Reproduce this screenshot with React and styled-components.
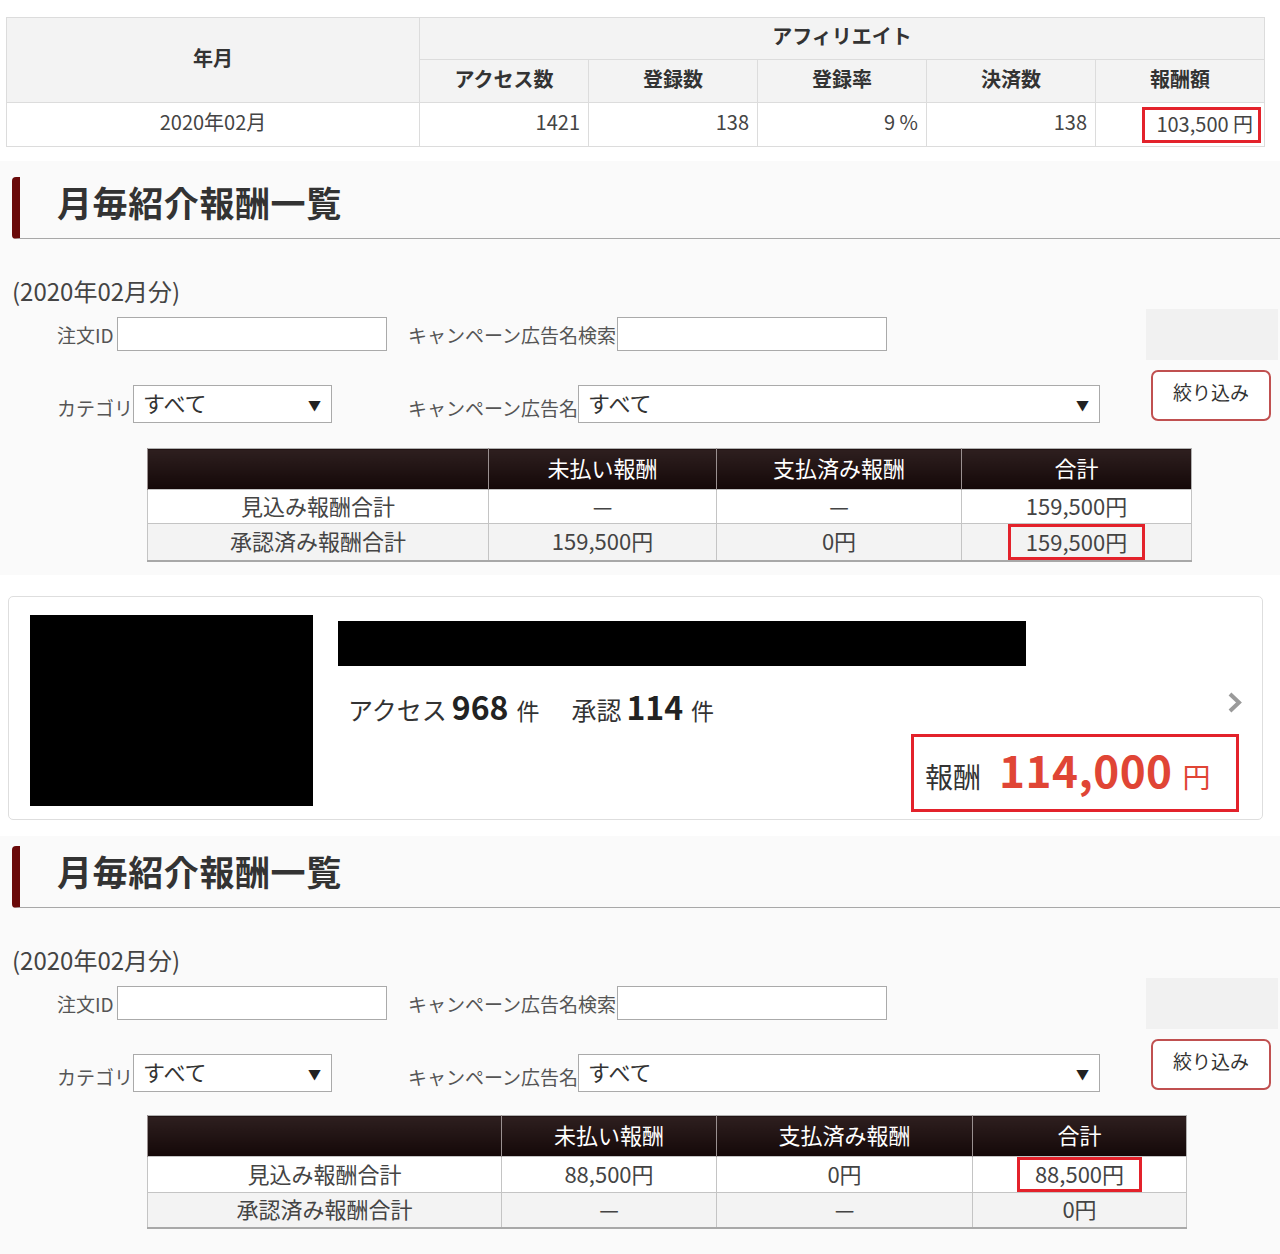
import React from 'react';
import styled, { createGlobalStyle } from 'styled-components';

const Global = createGlobalStyle`
  html, body { margin: 0; padding: 0; background: #fff; }
  body { font-family: "Noto Sans CJK JP", "Noto Sans", sans-serif; color: #333; }
  * { box-sizing: border-box; }
`;

const Page = styled.div`
  width: 1280px;
  background: #fff;
`;

/* ---------- top stats table ---------- */
const TopWrap = styled.div`
  padding: 17px 16px 14px 6px;
`;
const StatTable = styled.table`
  width: 1258px;
  border-collapse: collapse;
  table-layout: fixed;
  font-size: 20px;
  line-height: 1.2;
`;
const StatTh = styled.th`
  height: ${p => p.$h}px;
  background: #f3f3f3;
  border: 1px solid #dcdcdc;
  font-weight: 700;
  color: #333;
  text-align: center;
  padding: 0 0 5px;
`;
const StatTd = styled.td`
  height: 44px;
  border: 1px solid #dcdcdc;
  background: #fff;
  color: #444;
  text-align: ${p => p.$align || 'right'};
  padding: 0 ${p => p.$pr ?? 8}px ${p => p.$pb ?? 5}px 8px;
`;

/* ---------- highlight box ---------- */
const Highlight = styled.span`
  display: inline-block;
  vertical-align: middle;
  border: 3px solid #e3222b;
  height: ${p => p.$h}px;
  line-height: ${p => p.$h - 8}px;
  padding: 0 ${p => p.$px}px 0 ${p => p.$pl ?? p.$px}px;
`;

/* ---------- section ---------- */
const Section = styled.section`
  background: #fafafa;
  padding: ${p => p.$top}px 0 ${p => p.$bottom}px;
`;
const Title = styled.h2`
  margin: 0 0 0 12px;
  height: 62px;
  display: flex;
  align-items: center;
  padding: 0 0 12px 37px;
  border-left: 8px solid #6a0a0a;
  border-bottom: 1px solid #a8a8a8;
  border-radius: 4px 0 0 4px;
  font-size: 35px;
  font-weight: 700;
  color: #333;
  letter-spacing: 0.6px;
`;
const Period = styled.div`
  margin-top: 37px;
  padding-left: 12px;
  font-size: 24px;
  line-height: 30px;
  color: #444;
`;

const FilterArea = styled.div`
  display: flex;
  margin-top: 3px;
`;
const Fields = styled.div`
  flex: 1;
  padding: 8px 0 0 57px;
  display: flex;
  flex-direction: column;
  gap: 34px;
`;
const FieldRow = styled.div`
  display: flex;
  align-items: center;
  height: ${p => p.$h}px;
`;
const FieldGroup = styled.div`
  display: flex;
  align-items: center;
  width: ${p => (p.$w ? `${p.$w}px` : 'auto')};
  height: 100%;
`;
const Label = styled.span`
  width: ${p => p.$w}px;
  white-space: nowrap;
  font-size: 19px;
  color: #555;
  padding-top: ${p => p.$pt || 0}px;
`;
const TextInput = styled.input`
  width: ${p => p.$w}px;
  height: 100%;
  border: 1px solid #aaa;
  background: #fff;
  margin: 0;
  padding: 0 6px;
  font: inherit;
`;
const SelectBox = styled.div`
  width: ${p => p.$w}px;
  height: 100%;
  border: 1px solid #aaa;
  background: #fff;
  display: flex;
  align-items: center;
  justify-content: space-between;
  padding: 0 10px 4px 9px;
  font-size: 22px;
  color: #333;
`;
const Arrow = styled.span`
  font-size: 13px;
  color: #222;
  padding-top: 4px;
`;
const Side = styled.div`
  width: 132px;
  margin-right: 2px;
  display: flex;
  flex-direction: column;
`;
const GrayBox = styled.div`
  height: 51px;
  background: #f1f1f1;
`;
const FilterButton = styled.button`
  margin: 10px 0 0 5px;
  width: 120px;
  height: 51px;
  border: 2px solid #c05050;
  border-radius: 7px;
  background: #fff;
  font-family: inherit;
  font-size: 19px;
  color: #333;
  padding: 0 0 8px;
`;

const SumTable = styled.table`
  margin: ${p => p.$mt}px 0 0 147px;
  width: ${p => p.$w}px;
  border-collapse: collapse;
  table-layout: fixed;
  font-size: 22px;
  line-height: 1.1;
  border: 1px solid #b0b0b0;
  border-bottom: 2px solid #a8a8a8;
`;
const SumTh = styled.th`
  height: 41px;
  background: linear-gradient(#2e1f1f, #140808);
  color: #fff;
  font-weight: 400;
  border-left: 1px solid #9a9090;
  padding: 0 0 4px;
  text-align: center;
`;
const SumRow = styled.tr`
  background: ${p => (p.$alt ? '#f3f3f3' : '#fff')};
`;
const SumTd = styled.td`
  height: ${p => p.$h}px;
  border: 1px solid #c4c4c4;
  text-align: center;
  color: #444;
  padding: 0 0 3px;
`;
const SumTdHl = styled(SumTd)`
  padding: 0;
  line-height: 0;
`;

/* ---------- campaign card ---------- */
const Card = styled.div`
  margin: 21px 17px 16px 8px;
  border: 1px solid #dedede;
  border-radius: 5px;
  background: #fff;
  padding: 18px 19px 7px 21px;
  display: flex;
  align-items: flex-start;
`;
const Thumb = styled.div`
  width: 283px;
  height: 191px;
  background: #000;
  flex-shrink: 0;
`;
const CardBody = styled.div`
  flex: 1;
  margin-left: 25px;
  display: flex;
  flex-direction: column;
`;
const NameBar = styled.div`
  margin-top: 6px;
  width: 688px;
  height: 45px;
  background: #000;
`;
const StatsRow = styled.div`
  margin-top: 25px;
  height: 36px;
  display: flex;
  align-items: center;
  justify-content: space-between;
  padding-left: 10px;
`;
const Stats = styled.div`
  display: flex;
  align-items: baseline;
  gap: 32px;
  color: #333;
  padding-bottom: 6px;
`;
const Stat = styled.span`
  font-size: 25px;
  white-space: nowrap;
`;
const StatNum = styled.b`
  font-size: 32px;
  font-weight: 700;
  color: #222;
  margin: 0 8px 0 5px;
`;
const StatUnit = styled.span`
  font-size: 23px;
`;
const ChevronWrap = styled.span`
  align-self: flex-start;
  display: flex;
`;
const RewardBox = styled.div`
  align-self: flex-end;
  margin: 7px 4px 0 0;
  width: 328px;
  height: 78px;
  border: 3px solid #e3222b;
  display: flex;
  align-items: center;
  padding: 0 0 8px 11px;
`;
const RewardLine = styled.div`
  display: flex;
  align-items: baseline;
`;
const RewardLabel = styled.span`
  font-size: 28px;
  color: #333;
  margin-right: 18px;
`;
const RewardValue = styled.span`
  font-size: 44px;
  font-weight: 700;
  color: #e04535;
  letter-spacing: 0.5px;
`;
const RewardYen = styled.span`
  font-size: 28px;
  color: #e04535;
  margin-left: 10px;
`;

const Chevron = () => (
  <svg width="17" height="23" viewBox="0 0 17 23">
    <polyline points="4,3 13,11.5 4,20" fill="none" stroke="#9a9a9a" strokeWidth="4" />
  </svg>
);

const Summary = ({ cols, mt, rows }) => (
  <SumTable $w={cols.reduce((a, b) => a + b, 0)} $mt={mt}>
    <colgroup>
      {cols.map((c, i) => (
        <col key={i} style={{ width: c }} />
      ))}
    </colgroup>
    <thead>
      <tr>
        <SumTh />
        <SumTh>未払い報酬</SumTh>
        <SumTh>支払済み報酬</SumTh>
        <SumTh>合計</SumTh>
      </tr>
    </thead>
    <tbody>
      {rows.map((r, i) => {
        const h = i === 0 ? 34 : 35;
        return (
          <SumRow key={i} $alt={i === 1}>
            {r.cells.map((c, j) =>
              r.hl === j ? (
                <SumTdHl key={j} $h={h}>
                  <Highlight $h={h + 1} $px={15}>{c}</Highlight>
                </SumTdHl>
              ) : (
                <SumTd key={j} $h={h}>{c}</SumTd>
              )
            )}
          </SumRow>
        );
      })}
    </tbody>
  </SumTable>
);

const Filters = () => (
  <FilterArea>
    <Fields>
      <FieldRow $h={34}>
        <FieldGroup $w={351}>
          <Label $w={60}>注文ID</Label>
          <TextInput $w={270} />
        </FieldGroup>
        <FieldGroup>
          <Label $w={209}>キャンペーン広告名検索</Label>
          <TextInput $w={270} />
        </FieldGroup>
      </FieldRow>
      <FieldRow $h={38}>
        <FieldGroup $w={351}>
          <Label $w={76} $pt={6}>カテゴリ</Label>
          <SelectBox $w={199}>
            すべて<Arrow>▼</Arrow>
          </SelectBox>
        </FieldGroup>
        <FieldGroup>
          <Label $w={170} $pt={6}>キャンペーン広告名</Label>
          <SelectBox $w={522}>
            すべて<Arrow>▼</Arrow>
          </SelectBox>
        </FieldGroup>
      </FieldRow>
    </Fields>
    <Side>
      <GrayBox />
      <FilterButton>絞り込み</FilterButton>
    </Side>
  </FilterArea>
);

export default function App() {
  return (
    <Page>
      <Global />
      <TopWrap>
        <StatTable>
          <colgroup>
            <col style={{ width: 413 }} />
            <col style={{ width: 169 }} />
            <col style={{ width: 169 }} />
            <col style={{ width: 169 }} />
            <col style={{ width: 169 }} />
            <col style={{ width: 169 }} />
          </colgroup>
          <thead>
            <tr>
              <StatTh rowSpan={2} $h={42}>年月</StatTh>
              <StatTh colSpan={5} $h={42}>アフィリエイト</StatTh>
            </tr>
            <tr>
              <StatTh $h={43}>アクセス数</StatTh>
              <StatTh $h={43}>登録数</StatTh>
              <StatTh $h={43}>登録率</StatTh>
              <StatTh $h={43}>決済数</StatTh>
              <StatTh $h={43}>報酬額</StatTh>
            </tr>
          </thead>
          <tbody>
            <tr>
              <StatTd $align="center">2020年02月</StatTd>
              <StatTd>1421</StatTd>
              <StatTd>138</StatTd>
              <StatTd>9 %</StatTd>
              <StatTd>138</StatTd>
              <StatTd $pr={3} $pb={0}>
                <Highlight $h={36} $px={5} $pl={11}>103,500 円</Highlight>
              </StatTd>
            </tr>
          </tbody>
        </StatTable>
      </TopWrap>

      <Section $top={16} $bottom={13}>
        <Title>月毎紹介報酬一覧</Title>
        <Period>(2020年02月分)</Period>
        <Filters />
        <Summary
          mt={25}
          cols={[341, 228, 245, 230]}
          rows={[
            { cells: ['見込み報酬合計', '—', '—', '159,500円'] },
            { cells: ['承認済み報酬合計', '159,500円', '0円', '159,500円'], hl: 3 },
          ]}
        />
      </Section>

      <Card>
        <Thumb />
        <CardBody>
          <NameBar />
          <StatsRow>
            <Stats>
              <Stat>
                アクセス<StatNum>968</StatNum>
                <StatUnit>件</StatUnit>
              </Stat>
              <Stat>
                承認<StatNum>114</StatNum>
                <StatUnit>件</StatUnit>
              </Stat>
            </Stats>
            <ChevronWrap>
              <Chevron />
            </ChevronWrap>
          </StatsRow>
          <RewardBox>
            <RewardLine>
              <RewardLabel>報酬</RewardLabel>
              <RewardValue>114,000</RewardValue>
              <RewardYen>円</RewardYen>
            </RewardLine>
          </RewardBox>
        </CardBody>
      </Card>

      <Section $top={10} $bottom={28}>
        <Title>月毎紹介報酬一覧</Title>
        <Period>(2020年02月分)</Period>
        <Filters />
        <Summary
          mt={23}
          cols={[354, 215, 256, 214]}
          rows={[
            { cells: ['見込み報酬合計', '88,500円', '0円', '88,500円'], hl: 3 },
            { cells: ['承認済み報酬合計', '—', '—', '0円'] },
          ]}
        />
      </Section>
    </Page>
  );
}
